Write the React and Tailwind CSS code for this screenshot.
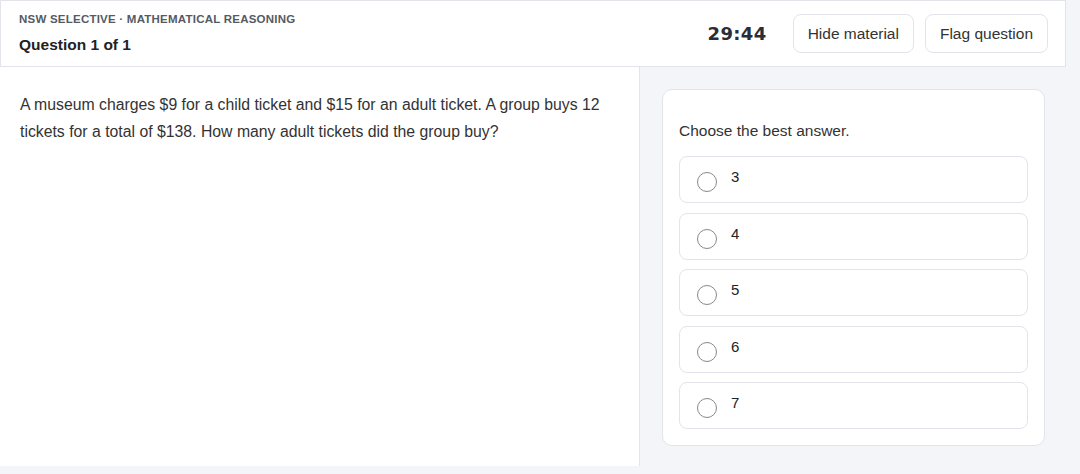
export default function App() {
  const options = ["3", "4", "5", "6", "7"];
  return (
    <div className="min-h-[474px] w-[1080px] bg-[#f4f5f9] font-['Liberation_Sans',Arial,sans-serif] text-[#222]">
      <div className="w-[1066px]">
        <header className="flex h-[67px] items-center justify-between border border-[#e2e4ea] bg-white pl-[18px] pr-[17px]">
          <div>
            <div className="text-[11.5px] font-bold tracking-[0.02em] text-[#555a63]">
              NSW SELECTIVE · MATHEMATICAL REASONING
            </div>
            <div className="mt-[4px] text-[15.5px] font-bold text-[#222]">Question 1 of 1</div>
          </div>
          <div className="flex items-center">
            <div className="mr-[26px] font-['DejaVu_Sans',sans-serif] text-[18px] font-bold tracking-[0.02em] text-[#2a2d35]">
              29:44
            </div>
            <button className="mr-[11px] h-[39px] rounded-lg border border-[#e2e4ea] bg-white px-[14px] text-[15.5px] text-[#333]">
              Hide material
            </button>
            <button className="h-[39px] rounded-lg border border-[#e2e4ea] bg-white px-[14px] text-[15.5px] text-[#333]">
              Flag question
            </button>
          </div>
        </header>
        <div className="flex">
          <div className="h-[399px] w-[640px] border-r border-[#e2e4ea] bg-white px-[20px] pt-[24px]">
            <p className="text-[15.8px] leading-[27px] text-[#333]">
              A museum charges $9 for a child ticket and $15 for an adult ticket. A group buys 12 tickets for a total of $138. How many adult tickets did the group buy?
            </p>
          </div>
          <div className="flex-1 pl-[22px] pr-[21px] pt-[22px]">
            <div className="rounded-[10px] border border-[#e2e4ea] bg-white px-[16px] pb-[16px] pt-[31px]">
              <div className="text-[15.5px] leading-[20px] text-[#333]">Choose the best answer.</div>
              <div className="mt-[15px] flex flex-col gap-[9.5px]">
                {options.map((o) => (
                  <label
                    key={o}
                    className="flex h-[47px] items-start rounded-lg border border-[#e2e4ea] bg-white pl-[17px] pt-[13px]"
                  >
                    <span className="mt-[2px] h-[20px] w-[20px] rounded-full border-[1.5px] border-[#888]" />
                    <span className="-mt-[3px] ml-[14px] text-[15px] leading-[20px] text-[#222]">{o}</span>
                  </label>
                ))}
              </div>
            </div>
          </div>
        </div>
      </div>
    </div>
  );
}
